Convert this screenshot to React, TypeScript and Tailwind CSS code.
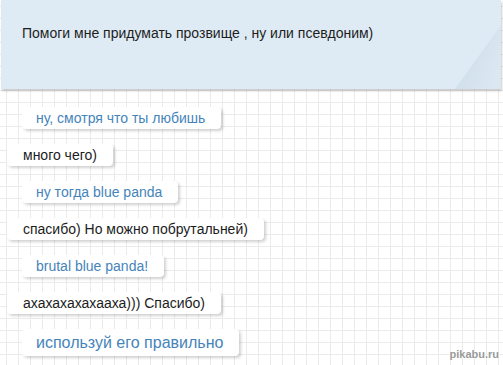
import React from "react";

const messages = [
  { text: "ну, смотря что ты любишь", mine: false },
  { text: "много чего)", mine: true },
  { text: "ну тогда blue panda", mine: false },
  { text: "спасибо) Но можно побрутальней)", mine: true },
  { text: "brutal blue panda!", mine: false },
  { text: "ахахахахахааха))) Спасибо)", mine: true },
];

function Bubble({ text, mine }: { text: string; mine: boolean }) {
  return (
    <div
      className={`h-[22px] flex items-center rounded-[4px] bg-white shadow-[2px_2px_3px_rgba(0,0,0,0.18)] ${
        mine ? "ml-[7px] pl-[16px] pr-[16px] text-[#1c1c1c]" : "ml-[22px] pl-[14px] pr-[16px] text-[#4584ba]"
      }`}
    >
      {text}
    </div>
  );
}

export default function App() {
  return (
    <div className="relative w-[503px] h-[365px] overflow-hidden bg-white bg-[linear-gradient(to_right,#ebebeb_1px,transparent_1px),linear-gradient(to_bottom,#ebebeb_1px,transparent_1px)] bg-[size:12px_12px] bg-[position:6px_6px] font-['Liberation_Sans',Arial,sans-serif] text-[13px]">
      {/* Question card */}
      <div className="relative h-[89px] w-[500px] ml-[1px] bg-[#deebf5] shadow-[1px_2px_2px_rgba(0,0,0,0.2)]">
        <p className="pt-[23px] pl-[21px] text-[14px] text-[#1e1e1e]">
          Помоги мне придумать прозвище , ну или псевдоним)
        </p>
        <svg className="absolute right-0 bottom-0" width="46" height="64" viewBox="0 0 46 64">
          <defs>
            <linearGradient id="fold" x1="0" y1="0" x2="1" y2="0.6">
              <stop offset="0" stopColor="#c9d9e5" />
              <stop offset="1" stopColor="#dbe8f2" />
            </linearGradient>
          </defs>
          <polygon points="0,64 46,0 46,64" fill="url(#fold)" />
        </svg>
      </div>

      {/* Dialogue */}
      <div className="flex flex-col items-start gap-[15px] mt-[18px] text-[14px]">
        {messages.map((m) => (
          <Bubble key={m.text} text={m.text} mine={m.mine} />
        ))}
        <div className="h-[27px] ml-[22px] pl-[14px] pr-[16px] flex items-center rounded-[4px] bg-white shadow-[2px_2px_3px_rgba(0,0,0,0.18)] text-[16px] text-[#4584ba]">
          используй его правильно
        </div>
      </div>

      <span className="absolute right-[4px] bottom-[3px] text-[11px] font-bold text-[#9a9a9a] [text-shadow:0_0_2px_#fff,0_0_2px_#fff]">
        pikabu.ru
      </span>
    </div>
  );
}
